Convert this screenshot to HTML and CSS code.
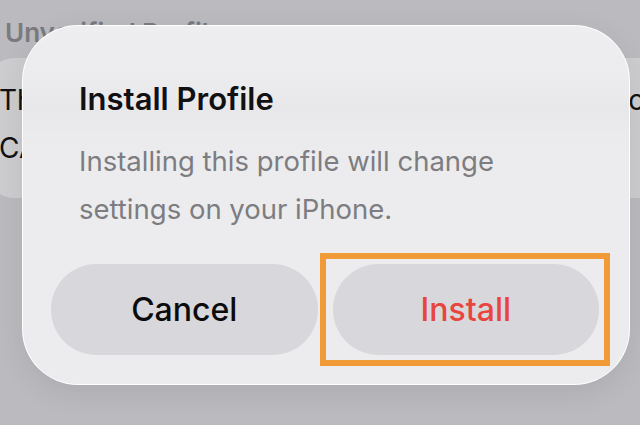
FILE: index.html
```html
<!DOCTYPE html>
<html lang="en">
<head>
<meta charset="utf-8">
<title>Install Profile</title>
<link rel="stylesheet" href="styles.css">
</head>
<body>
  <div class="page">
    <div class="bg-title">Unverified Profile</div>
    <div class="bg-card">
      <div class="bg-line"><span>The authenticity of</span><span>cannot be verified, so</span></div>
      <div class="bg-line"><span>CA Root Certificate</span></div>
    </div>
  </div>

  <div class="dialog" role="dialog" aria-labelledby="dlg-title">
    <div class="dialog-text">
      <h1 id="dlg-title" class="dialog-title">Install Profile</h1>
      <p class="dialog-body">Installing this profile will change<br>settings on your iPhone.</p>
    </div>
    <div class="dialog-actions">
      <button class="btn btn-cancel">Cancel</button>
      <button class="btn btn-install">Install</button>
    </div>
  </div>

  <div class="highlight"></div>
</body>
</html>
```

FILE: styles.css
```css
* { box-sizing: border-box; }

html, body {
  margin: 0;
  padding: 0;
}

body {
  width: 640px;
  height: 425px;
  overflow: hidden;
  position: relative;
  background: #bbbabf;
  font-family: Inter, "Noto Sans", sans-serif;
}

.page {
  padding-top: 17px;
}

.bg-title {
  padding-left: 5px;
  font-size: 26px;
  line-height: 31px;
  font-weight: 600;
  color: #7a7a7f;
  white-space: nowrap;
}

.bg-card {
  margin-top: 10px;
  margin-left: -12px;
  width: 680px;
  height: 140px;
  border-radius: 26px;
  background: #cdcdd0;
  padding: 18px 23px 0 11px;
}

.bg-line {
  display: flex;
  justify-content: space-between;
  font-size: 28px;
  line-height: 48px;
  color: #111;
  white-space: nowrap;
}

.dialog {
  position: absolute;
  left: 22px;
  top: 25px;
  width: 608px;
  height: 360px;
  border-radius: 56px;
  background: linear-gradient(to bottom, #eeeef0 0, #ececee 50px, #e8e8ea 85px, #ebebed 110px, #ececee 140px);
  border: 1px solid rgba(255, 255, 255, 0.95);
  box-shadow: 0 8px 30px rgba(0, 0, 0, 0.08);
  padding: 53px 30px 29px 28px;
  display: flex;
  flex-direction: column;
}

.dialog-text {
  padding: 0 28px;
}

.dialog-title {
  margin: 0;
  font-size: 31px;
  line-height: 40px;
  font-weight: 600;
  color: #111113;
}

.dialog-body {
  margin: 18px 0 0;
  font-size: 27.5px;
  line-height: 48px;
  font-weight: 400;
  color: #7d7d81;
}

.dialog-actions {
  margin-top: auto;
  display: flex;
  gap: 15px;
}

.btn {
  flex: 1;
  height: 91px;
  border: 0;
  border-radius: 46px;
  background: #d8d8dc;
  font-family: inherit;
  font-size: 32px;
  font-weight: 500;
  padding: 0;
}

.btn-cancel { color: #0b0b0c; }
.btn-install { color: #e8453f; }

.highlight {
  position: absolute;
  left: 320px;
  top: 253px;
  width: 290px;
  height: 113px;
  border: 6.5px solid #f09a38;
}
```
